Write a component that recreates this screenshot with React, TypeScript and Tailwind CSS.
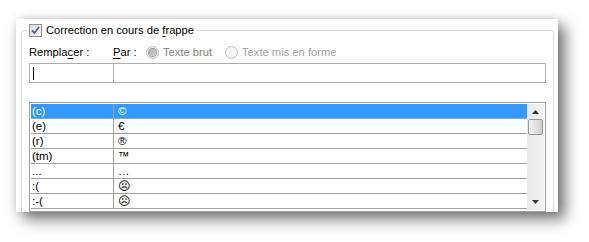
import React from 'react';

const rows: [string, string][] = [
  ['(c)', '©'],
  ['(e)', '€'],
  ['(r)', '®'],
  ['(tm)', '™'],
  ['...', '…'],
  [':(', '☹'],
  [':-(', '☹'],
];

function CheckBox() {
  return (
    <span className="flex h-[13px] w-[13px] items-center justify-center border border-[#8e8f8f] bg-gradient-to-br from-[#dcdcdc] to-[#f6f6f6]">
      <svg width="9" height="9" viewBox="0 0 9 9">
        <path d="M1 4.5 L3.5 7 L8 1" fill="none" stroke="#4a5f97" strokeWidth="1.8" />
      </svg>
    </span>
  );
}

function Radio({ checked }: { checked?: boolean }) {
  return (
    <span className="flex h-[13px] w-[13px] items-center justify-center rounded-full border border-[#c4c4c4] bg-[#f4f4f4]">
      {checked && <span className="h-[7px] w-[7px] rounded-full bg-gradient-to-br from-[#a8a8a8] to-[#d0d0d0] ring-1 ring-[#9a9a9a]" />}
    </span>
  );
}

export default function App() {
  return (
    <div className="h-[242px] w-[589px] overflow-hidden bg-white pl-[16px] pt-[19px] font-['Liberation_Sans',sans-serif] text-[11.2px] text-black">
      <div className="h-[193px] w-[542px] overflow-hidden bg-white px-[5px] shadow-[7px_7px_14px_rgba(0,0,0,0.55),0_0_8px_rgba(0,0,0,0.12)]">
        <fieldset className="mt-[4px] h-[220px] rounded-[3px] border border-[#d5dfe5] px-[7px]">
          <legend className="-ml-[2px] flex items-center gap-[4px] px-[2px] leading-[15px]">
            <CheckBox />
            <span>Correction en cours de <u className="underline-offset-2">f</u>rappe</span>
          </legend>

          <div className="mt-[6px] flex items-center leading-[16px]">
            <span className="w-[84px]">
              Rempla<u className="underline-offset-2">c</u>er :
            </span>
            <span className="w-[33px]">
              <u className="underline-offset-2">P</u>ar :
            </span>
            <span className="flex items-center gap-[4px] text-[#838383]">
              <Radio checked />
              <span className="w-[62px]">Texte brut</span>
            </span>
            <span className="flex items-center gap-[4px] text-[#a0a0a0]">
              <Radio />
              <span>Texte mis en forme</span>
            </span>
          </div>

          <div className="mt-[3px] flex h-[20px] w-[517px]">
            <div className="flex w-[85px] items-center border border-[#abadb3] pl-[3px]">
              <span className="h-[13px] w-px bg-black" />
            </div>
            <div className="flex-1 border border-l-0 border-[#abadb3]" />
          </div>

          <div className="mt-[19px] flex h-[110px] w-[517px] border border-[#a0a0a0] p-[1px] text-[11.5px]">
            <div className="flex-1">
              {rows.map(([a, b], i) => (
                <div
                  key={i}
                  className={`flex h-[15px] border-b border-[#a0a0a0] leading-[14px] ${i === 0 ? 'bg-[#3399ff] text-white' : ''}`}
                >
                  <span className="w-[83px] border-r border-[#a0a0a0] pl-[1px]">{a}</span>
                  <span className="pl-[4px]">{b}</span>
                </div>
              ))}
            </div>
            <div className="flex w-[17px] flex-col items-center bg-gradient-to-r from-[#e9e9e9] to-[#f2f2f2]">
              <svg className="mt-[6px]" width="7" height="4" viewBox="0 0 7 4">
                <path d="M0 4 L3.5 0 L7 4 Z" fill="#333" />
              </svg>
              <div className="mt-[5px] h-[16px] w-[15px] rounded-[2px] border border-[#989898] bg-gradient-to-r from-[#f4f4f4] via-[#e2e2e2] to-[#cfcfcf]" />
              <div className="flex-1" />
              <svg className="mb-[6px]" width="7" height="4" viewBox="0 0 7 4">
                <path d="M0 0 L3.5 4 L7 0 Z" fill="#333" />
              </svg>
            </div>
          </div>
        </fieldset>
      </div>
    </div>
  );
}
